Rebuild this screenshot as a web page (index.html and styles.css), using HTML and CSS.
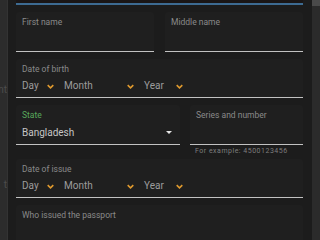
FILE: index.html
```html
<!DOCTYPE html>
<html lang="en">
<head>
    <meta charset="UTF-8">
    <meta name="viewport" content="width=device-width, initial-scale=1.0">
    <title>Passport details</title>
    <link rel="stylesheet" href="styles.css">
</head>
<body>
    <div class="backdrop">
        <span class="ghost ghost-1">ent</span>
        <span class="ghost ghost-2">t</span>
    </div>

    <div class="panel">
        <div class="prev-field"></div>

        <div class="row">
            <div class="field">
                <div class="label">First name</div>
                <div class="value"></div>
            </div>
            <div class="field">
                <div class="label">Middle name</div>
                <div class="value"></div>
            </div>
        </div>

        <div class="field">
            <div class="label">Date of birth</div>
            <div class="value dates">
                <span class="sel day">Day <svg class="chev" viewBox="0 0 10 6"><path d="M1 1l4 4 4-4"/></svg></span>
                <span class="sel month">Month <svg class="chev" viewBox="0 0 10 6"><path d="M1 1l4 4 4-4"/></svg></span>
                <span class="sel year">Year <svg class="chev" viewBox="0 0 10 6"><path d="M1 1l4 4 4-4"/></svg></span>
            </div>
        </div>

        <div class="row split">
            <div class="field">
                <div class="label label-active">State</div>
                <div class="value select">Bangladesh <span class="caret"></span></div>
            </div>
            <div class="cell">
                <div class="field">
                    <div class="label">Series and number</div>
                    <div class="value"></div>
                </div>
                <div class="helper">For example: 4500123456</div>
            </div>
        </div>

        <div class="field">
            <div class="label">Date of issue</div>
            <div class="value dates">
                <span class="sel day">Day <svg class="chev" viewBox="0 0 10 6"><path d="M1 1l4 4 4-4"/></svg></span>
                <span class="sel month">Month <svg class="chev" viewBox="0 0 10 6"><path d="M1 1l4 4 4-4"/></svg></span>
                <span class="sel year">Year <svg class="chev" viewBox="0 0 10 6"><path d="M1 1l4 4 4-4"/></svg></span>
            </div>
        </div>

        <div class="field">
            <div class="label">Who issued the passport</div>
            <div class="value"></div>
        </div>
    </div>

    <div class="scroll"><div class="thumb"></div></div>
</body>
</html>
```

FILE: styles.css
```css
:root {
    --panel-bg: #1c1c1c;
    --field-bg: #1f1f1f;
    --line: #c2c2c2;
    --label: #8a8a8a;
    --text: #c6c6c6;
    --muted: #9c9c9c;
    --accent: #e09a2e;
    --focus: #3d6b92;
    --ok: #58a85c;
}
* { box-sizing: border-box; }
body {
    margin: 0;
    height: 240px;
    overflow: hidden;
    display: flex;
    background: #2b2b2b;
    font-family: Roboto, 'Noto Sans', Arial, sans-serif;
}
.backdrop {
    width: 8px;
    flex: none;
    overflow: hidden;
    display: flex;
    flex-direction: column;
    align-items: flex-end;
    background: #2c2c2c;
    border-right: 1px solid #333;
}
.ghost {
    font-size: 10px;
    line-height: 12px;
    color: #4c4c4c;
    white-space: nowrap;
}
.ghost-1 { margin-top: 84px; }
.ghost-2 { margin-top: 83px; }
.panel {
    flex: 1;
    background: var(--panel-bg);
    padding: 0 9px 0 8px;
    display: flex;
    flex-direction: column;
    gap: 7px;
}
.prev-field {
    height: 5px;
    flex: none;
    background: #1a1616;
    border-bottom: 2px solid var(--focus);
}
.row {
    display: grid;
    grid-template-columns: 1fr 1fr;
    gap: 11px;
}
.row.split {
    grid-template-columns: 164px 1fr;
    gap: 10px;
    align-items: start;
}
.field {
    flex: none;
    background: var(--field-bg);
    padding: 5px 6px 3px;
    border-bottom: 1px solid var(--line);
    border-radius: 3px 3px 0 0;
}
.label {
    font-size: 8.5px;
    line-height: 11px;
    color: var(--label);
}
.label-active { color: var(--ok); }
.value {
    margin-top: 3.5px;
    height: 16px;
    font-size: 10px;
    line-height: 16px;
    color: var(--text);
    display: flex;
    align-items: center;
}
.value.select {
    justify-content: space-between;
    padding-right: 2px;
}
.caret {
    width: 0;
    height: 0;
    border-left: 3px solid transparent;
    border-right: 3px solid transparent;
    border-top: 3px solid #e6e6e6;
}
.dates { gap: 7px; }
.sel {
    display: flex;
    justify-content: space-between;
    align-items: center;
    padding-right: 3px;
    color: var(--muted);
}
.day { width: 35px; }
.month { width: 73px; }
.year { width: 42px; }
.chev {
    width: 7px;
    height: 5px;
    fill: none;
    stroke: var(--accent);
    stroke-width: 2.2;
}
.helper {
    margin: 2px 0 -4px 5px;
    font-size: 7px;
    line-height: 9px;
    letter-spacing: 0.5px;
    color: #7e7e7e;
}
.scroll {
    width: 8px;
    flex: none;
    background: #2b2b2b;
}
.thumb {
    height: 6px;
    background: #4a4a4a;
}
```
